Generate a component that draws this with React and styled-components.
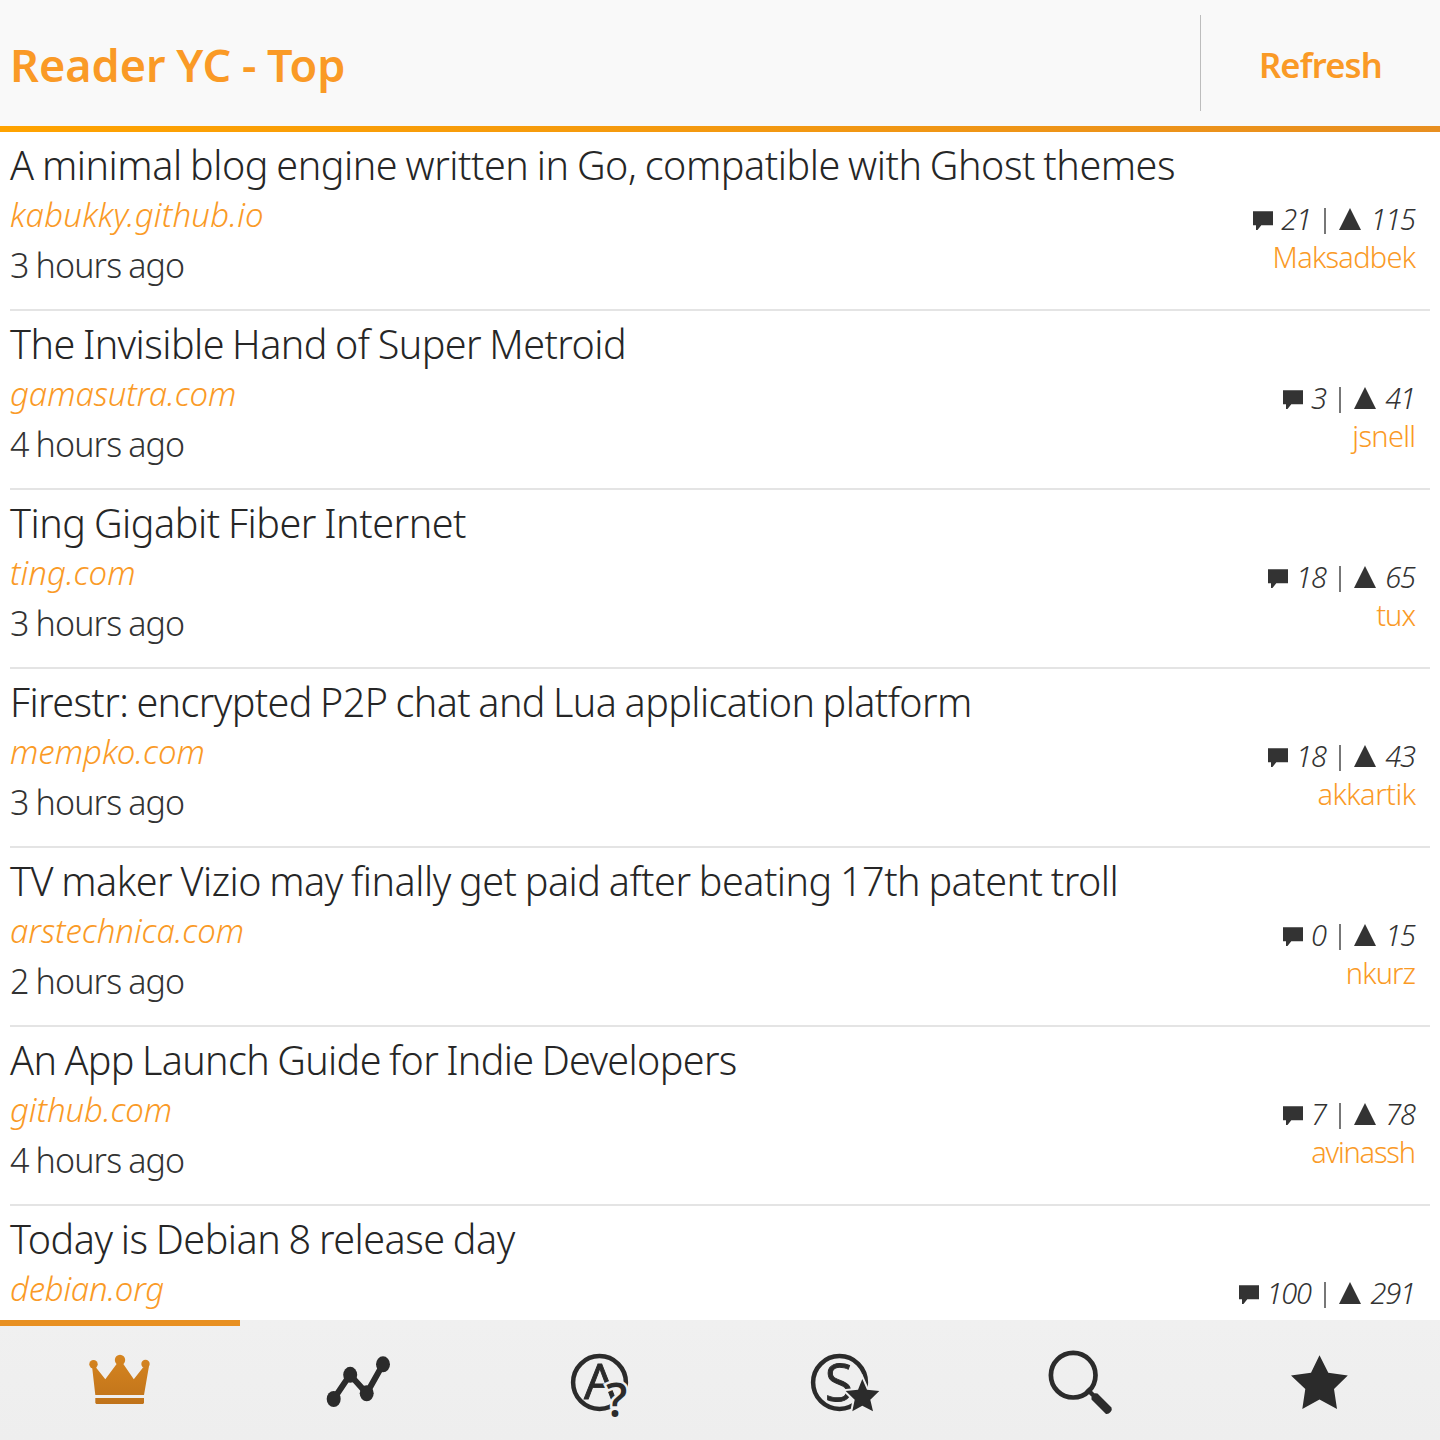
import React from "react";
import styled, { createGlobalStyle } from "styled-components";

const GlobalStyle = createGlobalStyle`
  * { box-sizing: border-box; }
  body {
    margin: 0;
    background: #fff;
    font-family: "Noto Sans", "Open Sans", sans-serif;
    color: #262626;
  }
`;

const Screen = styled.div`
  display: flex;
  flex-direction: column;
  width: 1440px;
  height: 1440px;
  overflow: hidden;
  background: #fff;
`;

const Header = styled.header`
  flex: none;
  display: flex;
  align-items: center;
  height: 126px;
  background: #f9f9f9;
  color: #fa9a26;
`;

const HeaderTitle = styled.h1`
  flex: 1;
  margin: 0;
  padding: 4px 0 0 10px;
  font-size: 45px;
  line-height: 60px;
  font-weight: 600;
  word-spacing: -1px;
  white-space: nowrap;
`;

const RefreshButton = styled.button`
  width: 240px;
  height: 96px;
  padding: 3px 0 0 0;
  border: 0;
  border-left: 1px solid #bdbdbd;
  background: none;
  color: inherit;
  font: 600 34.5px/50px "Noto Sans", "Open Sans", sans-serif;
  letter-spacing: -0.8px;
`;

const AccentLine = styled.div`
  flex: none;
  height: 6px;
  background: linear-gradient(90deg, #ffa300, #e88f20);
`;

const List = styled.main`
  flex: 1;
  min-height: 0;
  overflow: hidden;
  padding: 0 10px;
`;

const Row = styled.article`
  display: grid;
  grid-template-columns: 1fr auto;
  grid-template-rows: 50px 1fr;
  height: 179px;
  padding-top: 8px;
  border-bottom: 2px solid #e4e4e4;
  font-weight: 300;
  white-space: nowrap;
`;

const Title = styled.h2`
  grid-column: 1 / -1;
  margin: 0;
  font-size: 39.5px;
  line-height: 50px;
  font-weight: 300;
  word-spacing: -1.5px;
  font-variant-ligatures: common-ligatures;
  letter-spacing: ${(p) => p.$tracking}px;
`;

const Origin = styled.div`
  display: flex;
  flex-direction: column;
  align-items: flex-start;
`;

const Domain = styled.span`
  font-size: 33px;
  line-height: 50px;
  font-style: italic;
  color: #fa9a26;
  letter-spacing: ${(p) => p.$tracking}px;
`;

const Age = styled.span`
  font-size: 34px;
  line-height: 50px;
  color: #333;
  word-spacing: -1px;
  letter-spacing: -0.85px;
`;

const Meta = styled.div`
  display: flex;
  flex-direction: column;
  align-items: flex-end;
  padding: 10px 14px 0 0;
  font-size: 29px;
  line-height: 38px;
`;

const Stats = styled.div`
  display: flex;
  height: 38px;
  color: #333;
`;

const Count = styled.span`
  font-style: italic;
  letter-spacing: -1.2px;
  margin-right: 1.2px;
`;

const Divider = styled.span`
  width: 2px;
  height: 26px;
  margin: 8px 13px 0 12.4px;
  background: #777;
`;

const StatIcon = styled.svg`
  width: 22px;
  height: 38px;
  fill: #333;
  margin-right: ${(p) => p.$gap}px;
`;

const Author = styled.span`
  color: #fa9a26;
  letter-spacing: ${(p) => p.$tracking}px;
  margin-right: ${(p) => -p.$tracking}px;
`;

const TabBar = styled.nav`
  flex: none;
  display: grid;
  grid-template-columns: repeat(6, 1fr);
  height: 120px;
  background: linear-gradient(#f0f0f0, #eeeeee);
`;

const Tab = styled.button`
  display: flex;
  align-items: center;
  justify-content: center;
  padding: 0;
  border: 0;
  background: none;
  box-shadow: ${(p) => (p.$active ? "inset 0 6px #e89022" : "none")};
`;

const TabIcon = styled.svg`
  width: 80px;
  height: 80px;
  fill: #2b2b2b;
  overflow: visible;
`;

const IconLetter = styled.text`
  font-family: "Open Sans", "Noto Sans", sans-serif;
  font-size: ${(p) => p.$size}px;
  font-weight: ${(p) => p.$weight};
  text-anchor: middle;
  stroke: ${(p) => (p.$halo ? "#efefef" : "#2b2b2b")};
  stroke-width: ${(p) => (p.$halo ? 5 : 0.9)}px;
  paint-order: stroke;
`;

const stories = [
  { title: "A minimal blog engine written in Go, compatible with Ghost themes", domain: "kabukky.github.io", age: "3 hours ago", comments: 21, points: 115, author: "Maksadbek", tracking: [-0.45, 0.19, -0.75] },
  { title: "The Invisible Hand of Super Metroid", domain: "gamasutra.com", age: "4 hours ago", comments: 3, points: 41, author: "jsnell", tracking: [-0.55, -0.1, -0.7] },
  { title: "Ting Gigabit Fiber Internet", domain: "ting.com", age: "3 hours ago", comments: 18, points: 65, author: "tux", tracking: [-0.45, 0, -1] },
  { title: "Firestr: encrypted P2P chat and Lua application platform", domain: "mempko.com", age: "3 hours ago", comments: 18, points: 43, author: "akkartik", tracking: [-0.59, 0, -0.5] },
  { title: "TV maker Vizio may finally get paid after beating 17th patent troll", domain: "arstechnica.com", age: "2 hours ago", comments: 0, points: 15, author: "nkurz", tracking: [-0.49, -0.07, -0.9] },
  { title: "An App Launch Guide for Indie Developers", domain: "github.com", age: "4 hours ago", comments: 7, points: 78, author: "avinassh", tracking: [-0.64, -0.1, -1.2] },
  { title: "Today is Debian 8 release day", domain: "debian.org", comments: 100, points: 291, tracking: [-0.49, -0.27, 0] },
];

function Story({ story }) {
  const [title, domain, author] = story.tracking;
  return (
    <Row>
      <Title $tracking={title}>{story.title}</Title>
      <Origin>
        <Domain $tracking={domain}>{story.domain}</Domain>
        {story.age && <Age>{story.age}</Age>}
      </Origin>
      <Meta>
        <Stats>
          <StatIcon $gap={6} viewBox="0 0 22 38">
            <path d="M0 11.300h20v14H8.300L4.500 30H3v-4.700H0z" />
          </StatIcon>
          <Count>{story.comments}</Count>
          <Divider />
          <StatIcon $gap={9} viewBox="0 0 22 38">
            <path d="M11 8l11 22H0z" />
          </StatIcon>
          <Count>{story.points}</Count>
        </Stats>
        {story.author && <Author $tracking={author}>{story.author}</Author>}
      </Meta>
    </Row>
  );
}

function CrownIcon() {
  return (
    <TabIcon viewBox="80 20 80 80">
      <defs>
        <linearGradient id="gold" x1="0" y1="34" x2="0" y2="84" gradientUnits="userSpaceOnUse">
          <stop offset="0" stopColor="#d68520" />
          <stop offset="1" stopColor="#c0731a" />
        </linearGradient>
      </defs>
      <g fill="url(#gold)">
        <circle cx="93.500" cy="44.300" r="4.200" />
        <circle cx="120" cy="40" r="5.200" />
        <circle cx="145.500" cy="44" r="4.200" />
        <path d="M92 46L96 47.500 105.300 59.300 117 43.500H123L133.800 59.300 143 47.500 149 46 144 75H95.300z" />
        <path d="M95.300 78H144v5l-1 1H96.300l-1-1z" />
      </g>
    </TabIcon>
  );
}

function TrendIcon() {
  return (
    <TabIcon viewBox="80 20 80 80">
      <path d="M93.700 79L110 54.800 126.700 73.300 143 44.300" fill="none" stroke="#2b2b2b" strokeWidth="6" />
      <ellipse cx="93.700" cy="79" rx="7" ry="8" />
      <ellipse cx="110.200" cy="54.800" rx="7" ry="8" />
      <ellipse cx="126.700" cy="73.300" rx="7" ry="8" />
      <ellipse cx="143" cy="44.300" rx="7" ry="8" />
    </TabIcon>
  );
}

function AskIcon() {
  return (
    <TabIcon viewBox="80 20 80 80">
      <circle cx="119.500" cy="62.500" r="26.400" fill="none" stroke="#2b2b2b" strokeWidth="4.500" />
      <IconLetter x="119.800" y="79" $size={50} $weight={400}>A</IconLetter>
      <IconLetter x="136.800" y="97" $size={47} $weight={600} $halo>?</IconLetter>
    </TabIcon>
  );
}

function ShowIcon() {
  return (
    <TabIcon viewBox="80 20 80 80">
      <circle cx="119.500" cy="62.500" r="26.400" fill="none" stroke="#2b2b2b" strokeWidth="4.500" />
      <IconLetter x="119" y="81.300" $size={51} $weight={400}>S</IconLetter>
      <path
        d="M142.300 59L147 69.700 159.300 71 150.300 79.700 153 91.300 142.300 85.700 132.300 91.300 134.700 79.700 125.700 71 138 69.700z"
        stroke="#efefef" strokeWidth="4" paintOrder="stroke"
      />
    </TabIcon>
  );
}

function SearchIcon() {
  return (
    <TabIcon viewBox="80 20 80 80">
      <circle cx="113.200" cy="55.200" r="22.300" fill="none" stroke="#2b2b2b" strokeWidth="4.700" />
      <path d="M127 69l6 6" stroke="#2b2b2b" strokeWidth="4.500" />
      <path d="M131.500 74.500Q134 72.500 137.500 73.500L151.500 87.500Q152.500 90 150.500 92 148.500 94.500 146 94L131.500 79.500z" />
    </TabIcon>
  );
}

function StarIcon() {
  return (
    <TabIcon viewBox="80 20 80 80">
      <path d="M119.500 35.300L128.300 52.700 147.800 55.500 134 69 137 89 119.500 79.500 102.300 89 105.300 69 91 55.500 111 52.700z" />
    </TabIcon>
  );
}

const tabs = [CrownIcon, TrendIcon, AskIcon, ShowIcon, SearchIcon, StarIcon];

export default function App() {
  return (
    <Screen>
      <GlobalStyle />
      <Header>
        <HeaderTitle>Reader YC - Top</HeaderTitle>
        <RefreshButton>Refresh</RefreshButton>
      </Header>
      <AccentLine />
      <List>
        {stories.map((story) => (
          <Story key={story.title} story={story} />
        ))}
      </List>
      <TabBar>
        {tabs.map((Icon, i) => (
          <Tab key={i} $active={i === 0}>
            <Icon />
          </Tab>
        ))}
      </TabBar>
    </Screen>
  );
}
